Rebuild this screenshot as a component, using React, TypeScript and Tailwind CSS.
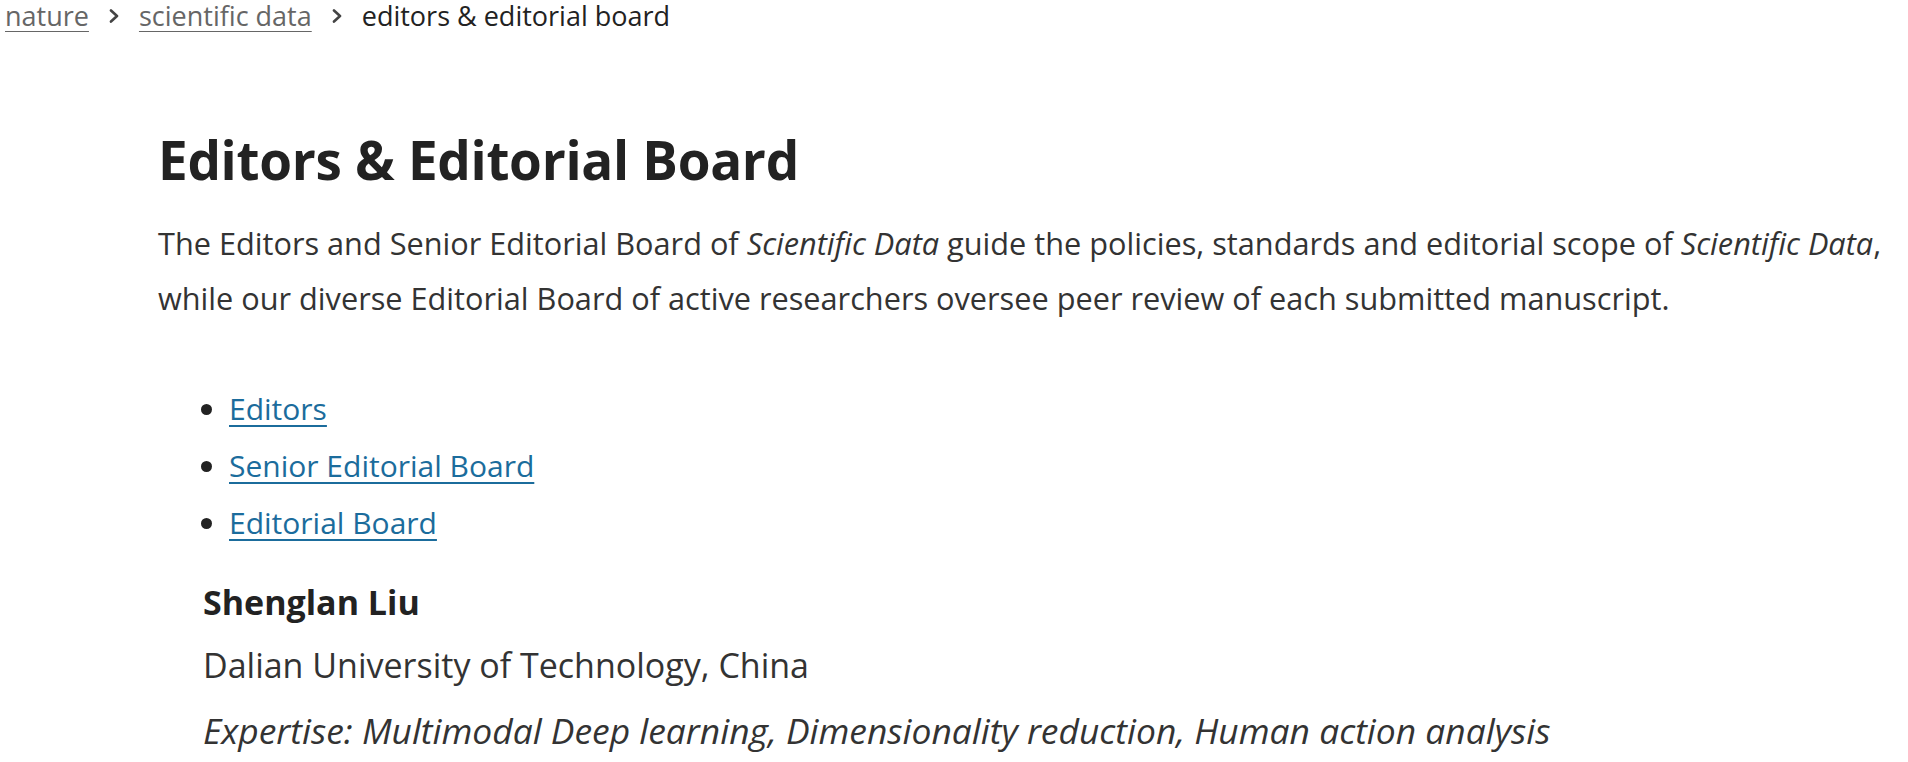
const crumbs = [
  { label: 'nature', href: '#' },
  { label: 'scientific data', href: '#' }
]

const sections = ['Editors', 'Senior Editorial Board', 'Editorial Board']

const Chevron = () => (
  <svg width="10" height="14" viewBox="0 0 10 14" className="mx-[20px]" fill="none">
    <polyline points="2,1.5 8,7 2,12.5" stroke="#444" strokeWidth="2.6" strokeLinecap="round" strokeLinejoin="round" />
  </svg>
)

export default function App() {
  return (
    <div className="min-h-[762px] bg-white text-[#222] font-['Open_Sans',sans-serif]">
      <nav className="flex items-center h-[31px] pl-[5px] text-[27px] leading-none">
        {crumbs.map(c => (
          <span key={c.label} className="flex items-center">
            <a href={c.href} className="text-[#666] underline underline-offset-[5px] decoration-1">
              {c.label}
            </a>
            <Chevron />
          </span>
        ))}
        <span className="text-[#222]">editors &amp; editorial board</span>
      </nav>

      <main className="pl-[158px] pt-[102px]">
        <h1 className="text-[53px] font-bold leading-none tracking-[-0.3px]">
          Editors &amp; Editorial Board
        </h1>
        <p className="mt-[30px] text-[30.7px] leading-[55px] text-[#333]">
          The Editors and Senior Editorial Board of <i>Scientific Data</i> guide the policies,
          standards and editorial scope of <i>Scientific Data</i>,<br />
          while our diverse Editorial Board of active researchers oversee peer review of each
          submitted manuscript.
        </p>

        <ul className="mt-[54px] pl-[71px] list-disc text-[30px] leading-[57px]">
          {sections.map(s => (
            <li key={s}>
              <a href="#" className="text-[#1b6c9c] underline underline-offset-[5px] decoration-2">
                {s}
              </a>
            </li>
          ))}
        </ul>

        <div className="pl-[45px] mt-[22px]">
          <h3 className="text-[34px] font-bold leading-[58px]">Shenglan Liu</h3>
          <p className="mt-[5px] text-[34px] leading-[58px] text-[#333]">
            Dalian University of Technology, China
          </p>
          <p className="mt-[7px] text-[35.4px] leading-[58px] italic text-[#333]">
            Expertise: Multimodal Deep learning, Dimensionality reduction, Human action analysis
          </p>
        </div>
      </main>
    </div>
  )
}
